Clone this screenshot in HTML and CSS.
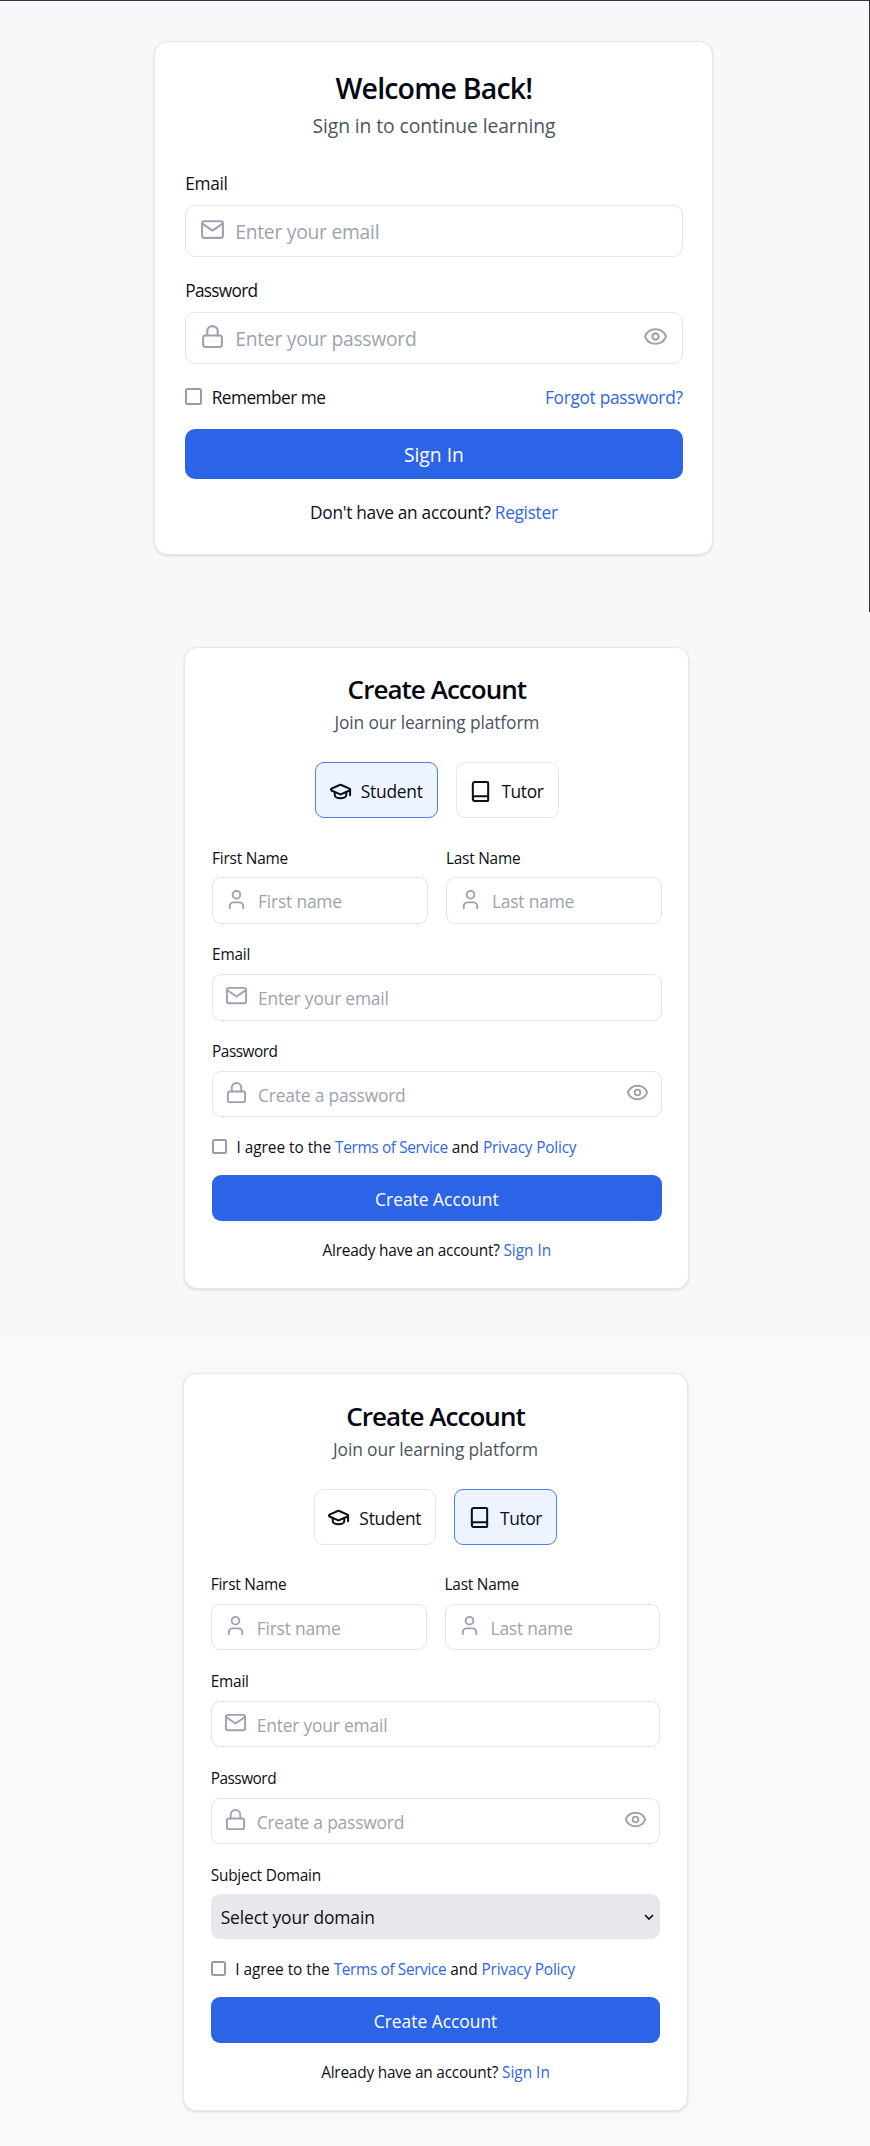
FILE: index.html
```html
<!DOCTYPE html>
<html lang="en">
<head>
<meta charset="utf-8">
<title>Account</title>
<link rel="stylesheet" href="styles.css">
</head>
<body>
<svg class="sprite" aria-hidden="true">
  <symbol id="mail" viewBox="0 0 24 24"><rect x="2" y="4" width="20" height="16" rx="2"/><path d="M2.5 6.5 12 13l9.500-6.500"/></symbol>
  <symbol id="lock" viewBox="0 0 24 24"><rect x="3" y="11" width="18" height="11" rx="2"/><path d="M7 11V7a5 5 0 0 1 10 0v4"/></symbol>
  <symbol id="eye" viewBox="0 0 24 24"><path d="M2.062 12.348a1 1 0 0 1 0-.696 10.750 10.750 0 0 1 19.876 0 1 1 0 0 1 0 .696 10.750 10.750 0 0 1-19.876 0"/><circle cx="12" cy="12" r="3"/></symbol>
  <symbol id="user" viewBox="0 0 24 24"><path d="M19 21v-2a4 4 0 0 0-4-4H9a4 4 0 0 0-4 4v2"/><circle cx="12" cy="7" r="4"/></symbol>
  <symbol id="cap" viewBox="0 0 24 24"><path d="M21.420 10.922a1 1 0 0 0-.019-1.838L12.830 5.180a2 2 0 0 0-1.660 0L2.600 9.080a1 1 0 0 0 0 1.832l8.570 3.908a2 2 0 0 0 1.660 0z"/><path d="M22 10v6"/><path d="M6 12.500V16a6 3 0 0 0 12 0v-3.500"/></symbol>
  <symbol id="book" viewBox="0 0 24 24"><path d="M4 19.500V4a2 2 0 0 1 2-2h13a1 1 0 0 1 1 1v18a1 1 0 0 1-1 1H6.500a2.500 2.500 0 0 1 0-5H20"/></symbol>
</svg>

<section class="screen screen-login">
  <main class="card card-login">
    <h1 class="title">Welcome Back!</h1>
    <p class="subtitle">Sign in to continue learning</p>
    <div class="field">
      <label class="label">Email</label>
      <div class="input"><svg class="icon"><use href="#mail"/></svg><span class="placeholder">Enter your email</span></div>
    </div>
    <div class="field">
      <label class="label label-password">Password</label>
      <div class="input"><svg class="icon"><use href="#lock"/></svg><span class="placeholder">Enter your password</span><svg class="icon"><use href="#eye"/></svg></div>
    </div>
    <div class="row">
      <span class="checkbox"></span><span class="remember">Remember me</span><a class="link forgot">Forgot password?</a>
    </div>
    <button class="button">Sign In</button>
    <p class="footer">Don't have an account? <a class="link">Register</a></p>
  </main>
</section>

<section class="screen screen-student">
  <main class="card card-register">
    <h1 class="title">Create Account</h1>
    <p class="subtitle">Join our learning platform</p>
    <div class="tabs">
      <div class="tab tab-student tab-active"><svg class="tab-icon"><use href="#cap"/></svg><span>Student</span></div>
      <div class="tab tab-tutor"><svg class="tab-icon"><use href="#book"/></svg><span>Tutor</span></div>
    </div>
    <div class="names">
      <div class="field">
        <label class="label">First Name</label>
        <div class="input"><svg class="icon"><use href="#user"/></svg><span class="placeholder">First name</span></div>
      </div>
      <div class="field">
        <label class="label">Last Name</label>
        <div class="input"><svg class="icon"><use href="#user"/></svg><span class="placeholder">Last name</span></div>
      </div>
    </div>
    <div class="field">
      <label class="label">Email</label>
      <div class="input"><svg class="icon"><use href="#mail"/></svg><span class="placeholder">Enter your email</span></div>
    </div>
    <div class="field">
      <label class="label label-password">Password</label>
      <div class="input"><svg class="icon"><use href="#lock"/></svg><span class="placeholder">Create a password</span><svg class="icon"><use href="#eye"/></svg></div>
    </div>
    <div class="row">
      <span class="checkbox"></span><span class="agree">I agree to the <a class="link terms">Terms of Service</a> and <a class="link policy">Privacy Policy</a></span>
    </div>
    <button class="button">Create Account</button>
    <p class="footer">Already have an account? <a class="link">Sign In</a></p>
  </main>
</section>

<section class="screen screen-tutor">
  <main class="card card-register">
    <h1 class="title">Create Account</h1>
    <p class="subtitle">Join our learning platform</p>
    <div class="tabs">
      <div class="tab tab-student"><svg class="tab-icon"><use href="#cap"/></svg><span>Student</span></div>
      <div class="tab tab-tutor tab-active"><svg class="tab-icon"><use href="#book"/></svg><span>Tutor</span></div>
    </div>
    <div class="names">
      <div class="field">
        <label class="label">First Name</label>
        <div class="input"><svg class="icon"><use href="#user"/></svg><span class="placeholder">First name</span></div>
      </div>
      <div class="field">
        <label class="label">Last Name</label>
        <div class="input"><svg class="icon"><use href="#user"/></svg><span class="placeholder">Last name</span></div>
      </div>
    </div>
    <div class="field">
      <label class="label">Email</label>
      <div class="input"><svg class="icon"><use href="#mail"/></svg><span class="placeholder">Enter your email</span></div>
    </div>
    <div class="field">
      <label class="label label-password">Password</label>
      <div class="input"><svg class="icon"><use href="#lock"/></svg><span class="placeholder">Create a password</span><svg class="icon"><use href="#eye"/></svg></div>
    </div>
    <div class="field">
      <label class="label">Subject Domain</label>
      <div class="select"><span>Select your domain</span><svg class="chevron" viewBox="0 0 10 6"><path d="M1 1l4 4 4-4"/></svg></div>
    </div>
    <div class="row">
      <span class="checkbox"></span><span class="agree">I agree to the <a class="link terms">Terms of Service</a> and <a class="link policy">Privacy Policy</a></span>
    </div>
    <button class="button">Create Account</button>
    <p class="footer">Already have an account? <a class="link">Sign In</a></p>
  </main>
</section>
</body>
</html>
```
FILE: styles.css
```css
* {
  box-sizing: border-box;
}

body {
  margin: 0;
  background: #f8f9fb;
  color: #0b0f19;
  font-family: "Open Sans", "Noto Sans", sans-serif;
}

h1,
p {
  margin: 0;
}

.sprite {
  display: none;
}

/* Screens */
.screen {
  display: flex;
  align-items: flex-start;
  background: #f7f8fa;
}

.screen-login {
  height: 612px;
  padding: 40px 0 0 154.400px;
  border-top: 1px solid #333538;
  border-right: 1px solid #333538;
}

.screen-student {
  height: 728px;
  padding: 34.500px 0 0 184.400px;
}

.screen-tutor {
  height: 806px;
  padding: 33.300px 0 0 183px;
  background: #f8f9fb;
}

/* Card */
.card {
  display: flex;
  flex-direction: column;
  background: #fff;
  border: 1px solid #e5e7eb;
  box-shadow: 0 1px 3px rgba(0, 0, 0, 0.120);
}

.card-login {
  --label-line: 24px;
  --label-gap: 9.500px;
  --label-size: 17.300px;
  --body-size: 19.300px;
  --body-spacing: -0.260px;
  --small-spacing: -0.300px;
  --input-height: 52px;
  --input-padding: 14px;
  --icon: 25px;
  --icon-gap: 10px;
  --radius: 10px;
  --checkbox: 17px;
  width: 559px;
  height: 514px;
  padding: 28px 29.800px 0;
  border-radius: 14px;
}

.card-register {
  --label-line: 20px;
  --label-gap: 8.500px;
  --label-size: 15.400px;
  --body-size: 17.400px;
  --body-spacing: -0.190px;
  --small-spacing: -0.210px;
  --input-height: 46.700px;
  --input-padding: 12px;
  --icon: 23px;
  --icon-gap: 10px;
  --radius: 9px;
  --checkbox: 15px;
  width: 505px;
  padding: 25.500px 26.700px 26.500px;
  border-radius: 13px;
}

.title {
  text-align: center;
  font-weight: 600;
  color: #030712;
}

.card-login .title {
  font-size: 28.500px;
  line-height: 36px;
  letter-spacing: -0.810px;
}

.card-register .title {
  font-size: 26px;
  line-height: 32px;
  letter-spacing: -0.960px;
}

.subtitle {
  text-align: center;
  color: #4b5563;
  font-size: var(--body-size);
}

.card-login .subtitle {
  margin: 6px 0 31.500px;
  line-height: 28px;
  letter-spacing: -0.080px;
}

.card-register .subtitle {
  margin-top: 5px;
  line-height: 24px;
  letter-spacing: -0.140px;
}

/* Role tabs */
.tabs {
  display: flex;
  justify-content: center;
  gap: 18px;
  margin: 28px 0 30.500px;
}

.tab {
  display: flex;
  align-items: center;
  gap: 9px;
  height: 56px;
  padding: 2px 0 0 12.700px;
  border: 1px solid #e5e7eb;
  border-radius: var(--radius);
  font-size: var(--body-size);
  line-height: 24px;
  letter-spacing: -0.250px;
}

.tab-student {
  width: 122.700px;
}

.tab-tutor {
  width: 103px;
  letter-spacing: -0.400px;
}

.tab-active {
  background: #edf3ff;
  border-color: #4a80f0;
}

.tab-icon {
  width: 23px;
  height: 23px;
  fill: none;
  stroke: currentColor;
  stroke-width: 2.100;
  stroke-linecap: round;
  stroke-linejoin: round;
}

/* Fields */
.names {
  display: grid;
  grid-template-columns: 1fr 1fr;
  gap: 18px;
}

.field {
  display: flex;
  flex-direction: column;
  gap: var(--label-gap);
}

.card-login .field + .field {
  margin-top: 21.700px;
}

.names + .field,
.card-register > .field + .field {
  margin-top: 21.700px;
}

.label {
  font-size: var(--label-size);
  line-height: var(--label-line);
  letter-spacing: var(--small-spacing);
}

.label-password {
  letter-spacing: -0.700px;
}

.card-register .label-password {
  letter-spacing: -0.500px;
}

.input {
  display: flex;
  align-items: center;
  gap: var(--icon-gap);
  height: var(--input-height);
  padding: 0 var(--input-padding);
  border: 1px solid #e3e5e8;
  border-radius: var(--radius);
  color: #9ca3af;
}

.icon {
  flex: none;
  width: var(--icon);
  height: var(--icon);
  margin-bottom: 2.500px;
  fill: none;
  stroke: currentColor;
  stroke-width: 2;
  stroke-linecap: round;
  stroke-linejoin: round;
}

.placeholder {
  flex: 1;
  padding-top: 1.500px;
  font-size: var(--body-size);
  line-height: 24px;
  letter-spacing: var(--body-spacing);
  white-space: nowrap;
}

.card-register .placeholder {
  padding-top: 2px;
}

.select {
  display: flex;
  align-items: center;
  justify-content: space-between;
  height: 45px;
  padding: 1px 6.500px 0 10px;
  background: #e8e7ec;
  border-radius: var(--radius);
  font-size: var(--body-size);
  line-height: 24px;
  letter-spacing: -0.100px;
}

.chevron {
  width: 10px;
  height: 6px;
  fill: none;
  stroke: currentColor;
  stroke-width: 1.700;
}

/* Options row */
.row {
  display: flex;
  align-items: center;
  gap: 9.500px;
  font-size: var(--label-size);
  line-height: var(--label-line);
}

.card-login .row {
  margin: 22.300px 0 18.500px;
}

.card-register .row {
  margin: 21px 0 17px;
}

.checkbox {
  width: var(--checkbox);
  height: var(--checkbox);
  margin-bottom: 3px;
  border: 2px solid #9a9aa8;
  border-radius: 2.500px;
}

.remember {
  letter-spacing: -0.540px;
}

.forgot {
  margin-left: auto;
  letter-spacing: -0.290px;
}

.agree {
  letter-spacing: -0.040px;
  white-space: nowrap;
}

.terms {
  letter-spacing: -0.360px;
}

.policy {
  letter-spacing: -0.190px;
}

.link {
  color: #2f66e9;
}

.button {
  border: 0;
  padding: 2px 0 0;
  background: #2c64e8;
  color: #fff;
  border-radius: var(--radius);
  font-family: inherit;
  font-size: var(--body-size);
  line-height: 24px;
}

.card-login .button {
  height: 50px;
}

.card-register .button {
  height: 46px;
  padding-top: 1px;
}

.footer {
  text-align: center;
  font-size: var(--label-size);
  line-height: var(--label-line);
  letter-spacing: var(--small-spacing);
}

.card-login .footer {
  margin-top: 22px;
}

.card-register .footer {
  margin-top: 20px;
}

.card-register .footer .link {
  letter-spacing: 0;
}
```
